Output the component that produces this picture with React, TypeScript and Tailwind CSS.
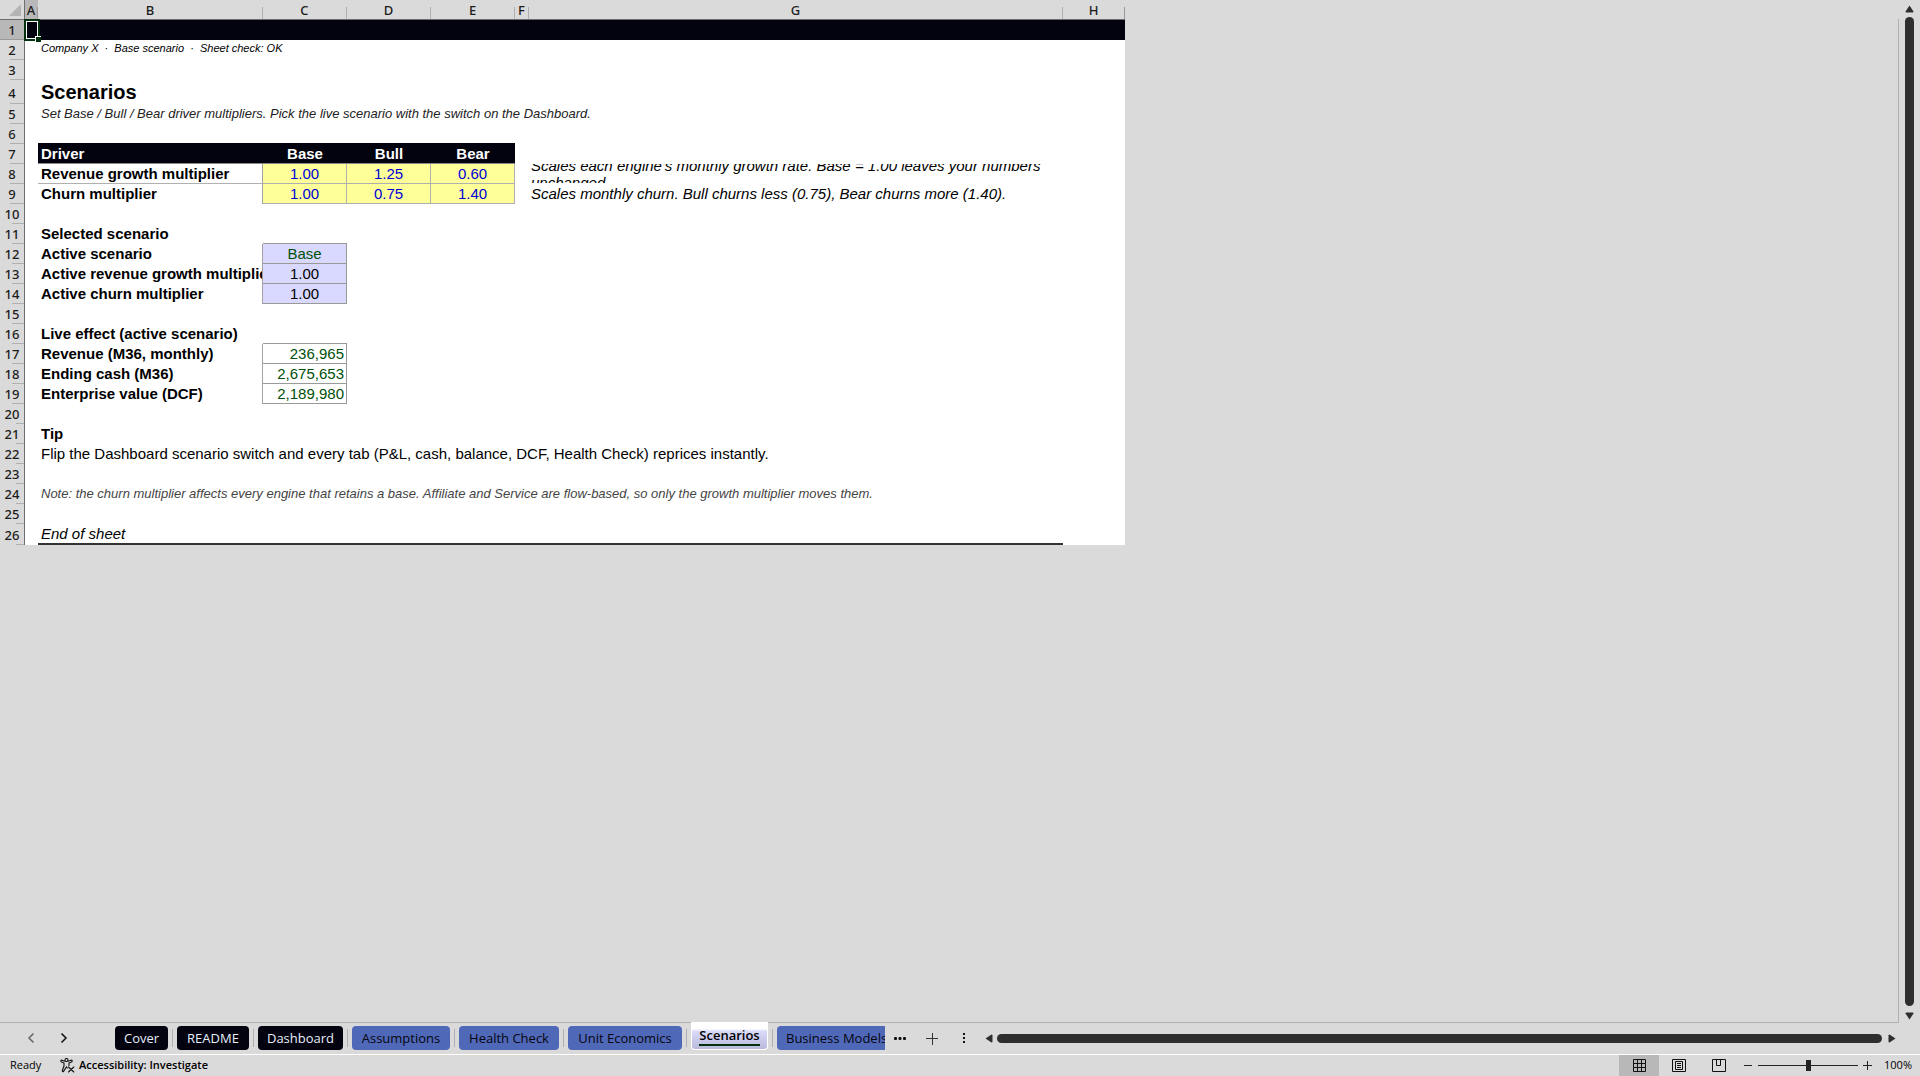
import React from "react";

function Column({ name, last, selected }: { name: string; last?: boolean; selected?: boolean }) {
  return (
    <th scope="col" className={`border-b border-[#6e6e6e] p-0 font-medium ${selected ? "bg-[#b8b8b8]" : "bg-[#dadada]"}`}>
      <div className="flex h-[19px] items-end overflow-hidden">
        <span className="flex-1 text-center leading-[18px]">{name}</span>
        <span className={`h-3 w-px ${last || selected ? "bg-[#9a9a9a]" : "bg-[#b0b0b0]"}`} />
      </div>
    </th>
  );
}

function Row({ n, tall, children }: { n: number; tall?: boolean; children?: React.ReactNode }) {
  return (
    <tr className={tall ? "h-6" : "h-5"}>
      <th
        scope="row"
        className="border-r border-[#6e6e6e] bg-[#dadada] p-0 font-['Noto_Sans',sans-serif] text-[13px] font-medium text-[#1c1c1c]"
      >
        <div className={`flex flex-col ${tall ? "h-6" : "h-5"}`}>
          <span className={`flex-1 overflow-hidden text-center ${tall ? "leading-[27px]" : "leading-[21px]"}`}>{n}</span>
          <span className={`h-px self-end bg-[#b0b0b0] ${n < 10 ? "w-[14px]" : n < 20 ? "w-3" : "w-2"}`} />
        </div>
      </th>
      <td className="p-0" />
      {children ?? <td colSpan={7} />}
    </tr>
  );
}

const label = "overflow-hidden whitespace-nowrap p-0 pl-[3px] align-top leading-[19px] font-bold text-[15px]";

function Label({ children, boxed, line }: { children: React.ReactNode; boxed?: boolean; line?: boolean }) {
  return (
    <td className={`${label} ${boxed ? "border-r border-r-[#a3a3a3]" : ""} ${line ? "border-b border-b-[#b0b0b0]" : ""}`}>{children}</td>
  );
}

function Input({ value }: { value: string }) {
  return (
    <td className="border-r border-b border-[#b0b0b0] bg-[#ffff99] p-0 text-center text-[15px] leading-[19px] text-[#0000d8]">{value}</td>
  );
}

function Tab({ name, width, dark }: { name: string; width: string; dark?: boolean }) {
  return (
    <>
      <button
        className={`h-6 shrink-0 rounded-[4px] text-center text-[13px] leading-6 ${width} ${dark ? "bg-[#02030f] text-[#e8eefa]" : "bg-[#5068b8] font-medium text-[#05060f]"}`}
      >
        {name}
      </button>
      <Separator />
    </>
  );
}

function Separator() {
  return <span className="mx-1 mb-[3px] h-[18px] w-px shrink-0 bg-[#b0b0b0]" />;
}

const zoomSlider =
  "h-4 w-[100px] appearance-none bg-transparent [&::-webkit-slider-runnable-track]:h-px [&::-webkit-slider-runnable-track]:bg-[#222] [&::-webkit-slider-thumb]:-mt-[5px] [&::-webkit-slider-thumb]:h-[11px] [&::-webkit-slider-thumb]:w-[5px] [&::-webkit-slider-thumb]:appearance-none [&::-webkit-slider-thumb]:bg-[#222]";

export default function App() {
  return (
    <div className="flex h-screen w-full flex-col overflow-hidden bg-[#dadada] font-['Liberation_Sans',Arial,sans-serif] text-black">
      <div className="flex min-h-0 flex-1">
        <main className="min-w-0 flex-1 overflow-hidden border-b border-[#b0b0b0]">
          <table className="w-[1125px] table-fixed border-separate border-spacing-0 bg-white">
            <colgroup>
              <col className="w-[25px]" />
              <col className="w-[13px]" />
              <col className="w-[225px]" />
              <col className="w-[84px]" />
              <col className="w-[84px]" />
              <col className="w-[84px]" />
              <col className="w-[14px]" />
              <col className="w-[534px]" />
              <col className="w-[62px]" />
            </colgroup>
            <thead>
              <tr className="font-['Noto_Sans',sans-serif] text-[13px] text-[#1c1c1c]">
                <th className="border-r border-b border-[#6e6e6e] bg-[#dadada] p-0">
                  <button aria-label="Select all" className="flex h-[19px] w-6 items-end justify-end pr-[3px] pb-[3px]">
                    <svg width="12" height="12" viewBox="0 0 12 12">
                      <path d="M12 0V12H0Z" fill="#b4b4b4" />
                    </svg>
                  </button>
                </th>
                <Column name="A" selected />
                <Column name="B" />
                <Column name="C" />
                <Column name="D" />
                <Column name="E" />
                <Column name="F" />
                <Column name="G" />
                <Column name="H" last />
              </tr>
            </thead>
            <tbody>
              <tr className="h-5">
                <th scope="row" className="border-r border-[#6e6e6e] bg-[#b8b8b8] p-0 font-['Noto_Sans',sans-serif] text-[13px] font-medium text-[#1c1c1c]">
                  <div className="h-5 overflow-hidden border-b border-[#9a9a9a] leading-[21px]">1</div>
                </th>
                <td className="relative bg-[#02030f] p-0">
                  <div className="absolute -top-px -left-px h-[22px] w-4 border-2 border-[#03300f]">
                    <div className="h-full border border-white" />
                    <span className="absolute -right-[3px] -bottom-[3px] h-[6px] w-[6px] border-t border-l border-white bg-[#03300f]" />
                  </div>
                </td>
                <td colSpan={7} className="bg-[#02030f] p-0" />
              </tr>
              <Row n={2}>
                <td colSpan={7} className="p-0 pl-[3px] align-top text-[11px] leading-[17px] whitespace-pre italic">
                  {"Company X  ·  Base scenario  ·  Sheet check: OK"}
                </td>
              </Row>
              <Row n={3} />
              <Row n={4} tall>
                <td colSpan={7} className="p-0 pl-[3px] text-[20px] leading-6 font-bold">Scenarios</td>
              </Row>
              <Row n={5}>
                <td colSpan={7} className="p-0 pl-[3px] text-[13px] leading-5 text-[#222] italic">
                  Set Base / Bull / Bear driver multipliers. Pick the live scenario with the switch on the Dashboard.
                </td>
              </Row>
              <Row n={6}>
                <td colSpan={4} className="border-b border-[#02030f] p-0" />
                <td colSpan={3} />
              </Row>
              <Row n={7}>
                <td className={`${label} border-b border-[#8a8a8a] bg-[#02030f] text-white`}>Driver</td>
                {["Base", "Bull", "Bear"].map((s) => (
                  <td key={s} className="border-b border-[#8a8a8a] bg-[#02030f] p-0 text-center text-[15px] leading-[19px] font-bold text-white">{s}</td>
                ))}
                <td colSpan={3} />
              </Row>
              <Row n={8}>
                <Label boxed line>Revenue growth multiplier</Label>
                <Input value="1.00" />
                <Input value="1.25" />
                <Input value="0.60" />
                <td />
                <td className="p-0 pl-[2px] text-[15px] italic">
                  <div className="flex h-5 items-center overflow-hidden border-b border-transparent">
                    <p className="leading-[17px]">Scales each engine's monthly growth rate. Base = 1.00 leaves your numbers unchanged.</p>
                  </div>
                </td>
                <td />
              </Row>
              <Row n={9}>
                <Label boxed>Churn multiplier</Label>
                <Input value="1.00" />
                <Input value="0.75" />
                <Input value="1.40" />
                <td />
                <td className="p-0 pl-[2px] text-[15px] leading-5 whitespace-nowrap italic">
                  Scales monthly churn. Bull churns less (0.75), Bear churns more (1.40).
                </td>
                <td />
              </Row>
              <Row n={10} />
              <Row n={11}>
                <Label>Selected scenario</Label>
                <td className="border-b border-[#9a9a9a] p-0" />
                <td colSpan={5} />
              </Row>
              {[
                { n: 12, name: "Active scenario", value: "Base" },
                { n: 13, name: "Active revenue growth multiplier", value: "1.00" },
                { n: 14, name: "Active churn multiplier", value: "1.00" },
              ].map((r) => (
                <Row key={r.n} n={r.n}>
                  <Label boxed>{r.name}</Label>
                  <td className={`border-r border-b border-[#9a9a9a] bg-[#d9d9ff] p-0 text-center text-[15px] leading-[19px] ${r.n === 12 ? "text-[#00500a]" : ""}`}>{r.value}</td>
                  <td colSpan={5} />
                </Row>
              ))}
              <Row n={15} />
              <Row n={16}>
                <Label>Live effect (active scenario)</Label>
                <td className="border-b border-[#9a9a9a] p-0" />
                <td colSpan={5} />
              </Row>
              {[
                { n: 17, name: "Revenue (M36, monthly)", value: "236,965" },
                { n: 18, name: "Ending cash (M36)", value: "2,675,653" },
                { n: 19, name: "Enterprise value (DCF)", value: "2,189,980" },
              ].map((r) => (
                <Row key={r.n} n={r.n}>
                  <Label boxed>{r.name}</Label>
                  <td className="border-r border-b border-[#9a9a9a] p-0 pr-[2px] text-right text-[15px] leading-[19px] text-[#00500a]">{r.value}</td>
                  <td colSpan={5} />
                </Row>
              ))}
              <Row n={20} />
              <Row n={21}>
                <Label>Tip</Label>
                <td colSpan={6} />
              </Row>
              <Row n={22}>
                <td colSpan={7} className="p-0 pl-[3px] text-[15px] leading-5">
                  Flip the Dashboard scenario switch and every tab (P&amp;L, cash, balance, DCF, Health Check) reprices instantly.
                </td>
              </Row>
              <Row n={23} />
              <Row n={24}>
                <td colSpan={7} className="p-0 pl-[3px] text-[13px] leading-5 text-[#444] italic">
                  Note: the churn multiplier affects every engine that retains a base. Affiliate and Service are flow-based, so only the growth multiplier moves them.
                </td>
              </Row>
              <Row n={25} />
              <Row n={26}>
                <td colSpan={6} className="border-b-2 border-[#333] p-0 pl-[3px] text-[15px] leading-[19px] italic">End of sheet</td>
                <td />
              </Row>
            </tbody>
          </table>
        </main>
        <div className="mt-[19px] w-px bg-[#b0b0b0]" />
        <div className="flex w-[21px] flex-col items-center pr-px">
          <button aria-label="Scroll up" className="flex h-[17px] items-center">
            <svg width="9" height="8" viewBox="0 0 9 8">
              <path d="M4.5 0.5L8.5 6.500Q8.500 7.500 7.500 7.500H1.500Q.5 7.500 .5 6.500Z" fill="#2e2e2e" />
            </svg>
          </button>
          <div className="w-[9px] flex-1 rounded-full bg-[#2e2e2e]" />
          <button aria-label="Scroll down" className="flex h-[17px] items-end pb-[3px]">
            <svg width="9" height="8" viewBox="0 0 9 8">
              <path d="M4.500 7.500L8.500 1.500Q8.500 .5 7.500 .5H1.500Q.5 .5 .5 1.500Z" fill="#2e2e2e" />
            </svg>
          </button>
        </div>
      </div>

      <div className="flex h-[31px] shrink-0 font-['Open_Sans','Noto_Sans',sans-serif]">
        <nav aria-label="Sheets" className="flex h-full w-[885px] items-end overflow-x-clip pb-1">
          <button aria-label="Previous sheet" className="flex h-6 w-[62px] shrink-0 items-center justify-center">
            <svg width="8" height="12" viewBox="0 0 8 12" fill="none" stroke="#666" strokeWidth="1.500"><path d="M6.500 1.500L2 6L6.500 10.500" /></svg>
          </button>
          <button aria-label="Next sheet" className="mr-[49px] flex h-6 w-1 shrink-0 items-center justify-center">
            <svg className="shrink-0" width="8" height="12" viewBox="0 0 8 12" fill="none" stroke="#111" strokeWidth="1.500"><path d="M1.500 1.500L6 6L1.500 10.500" /></svg>
          </button>
          <Tab name="Cover" width="w-[53px]" dark />
          <Tab name="README" width="w-[72px]" dark />
          <Tab name="Dashboard" width="w-[85px]" dark />
          <Tab name="Assumptions" width="w-[98px]" />
          <Tab name="Health Check" width="w-[100px]" />
          <Tab name="Unit Economics" width="w-[114px]" />
          <button className="flex h-7 w-[77px] shrink-0 flex-col items-center rounded-b-[4px] border border-t-0 border-white bg-linear-to-b from-white from-25% via-[#d9d9f8] via-35% to-[#b9b9dd] pt-[5px] text-[13px] leading-[17px] font-semibold">
            <span className="border-b-2 border-[#03300f]">Scenarios</span>
          </button>
          <Separator />
          <button className="h-6 w-[120px] shrink-0 rounded-[4px] bg-[#5068b8] pl-[9px] text-left text-[13px] leading-6 font-medium whitespace-nowrap text-[#05060f]">Business Models</button>
        </nav>
        <button aria-label="More sheets" className="flex w-[30px] items-center justify-center">
          <svg width="12" height="3" viewBox="0 0 12 3" fill="#111"><rect width="3" height="3" rx="1" /><rect x="4.500" width="3" height="3" rx="1" /><rect x="9" width="3" height="3" rx="1" /></svg>
        </button>
        <button aria-label="New sheet" className="flex w-[34px] items-center justify-center">
          <svg width="12" height="12" viewBox="0 0 12 12" stroke="#333"><path d="M0 5.500H12M6.500 0V12" /></svg>
        </button>
        <button aria-label="Resize tabs" className="flex w-[30px] items-center justify-center">
          <svg width="3" height="11" viewBox="0 0 3 11" fill="#111"><rect width="2" height="2" /><rect y="4" width="2" height="2" /><rect y="8" width="2" height="2" /></svg>
        </button>
        <div className="flex min-w-0 flex-1 items-center gap-1 pr-6">
          <button aria-label="Scroll left" className="ml-[6px]">
            <svg width="8" height="9" viewBox="0 0 8 9"><path d="M.5 4.500L6.500 .5Q7.500 .5 7.500 1.500V7.500Q7.500 8.500 6.500 8.500Z" fill="#2e2e2e" /></svg>
          </button>
          <div className="h-[9px] flex-1 rounded-full bg-[#2e2e2e]" />
          <button aria-label="Scroll right" className="ml-[2px]">
            <svg width="8" height="9" viewBox="0 0 8 9"><path d="M7.500 4.500L1.500 .5Q.5 .5 .5 1.500V7.500Q.5 8.500 1.500 8.500Z" fill="#2e2e2e" /></svg>
          </button>
        </div>
      </div>

      <footer className="flex h-[22px] shrink-0 items-center border-t border-white font-['Open_Sans','Noto_Sans',sans-serif] text-[11px]">
        <span className="w-[60px] pl-[10px] font-medium">Ready</span>
        <button className="flex items-center gap-1 font-semibold">
          <svg width="15" height="15" viewBox="0 0 15 15" fill="none" stroke="#111" strokeWidth="1.100" strokeLinecap="round" strokeLinejoin="round">
            <circle cx="6.500" cy="2" r="1.500" />
            <path d="M5 3.200L2 2.200Q.8 2 .8 3Q.8 3.600 1.500 3.900L4 5V8L2.300 12.500Q2.200 13.800 3.400 13.600L6.500 8.800L7.300 10M8 3.200L11 2.200Q12.200 2 12.200 3Q12.200 3.600 11.500 3.900L9 5V7.500M8.500 9L13.800 14M13.800 9L8.500 14" />
          </svg>
          Accessibility: Investigate
        </button>
        <div className="ml-auto flex h-full items-center">
          <button aria-label="Normal view" className="flex h-full w-10 items-center justify-center bg-[#b8b8b8]">
            <svg width="13" height="13" viewBox="0 0 13 13" fill="none" stroke="#111"><path d="M.5 .5H12.500V12.500H.5ZM4.500 .5V12.500M8.500 .5V12.500M.5 4.500H12.500M.5 8.500H12.500" /></svg>
          </button>
          <button aria-label="Page layout" className="flex h-full w-10 items-center justify-center">
            <svg width="14" height="13" viewBox="0 0 14 13" fill="none" stroke="#111"><path d="M.5 .5H13.500V12.500H.5ZM3.500 2.500H10.500V10.500H3.500ZM5 4.500H9M5 6.500H9M5 8.500H9" /></svg>
          </button>
          <button aria-label="Page break preview" className="flex h-full w-10 items-center justify-center">
            <svg width="14" height="13" viewBox="0 0 14 13" fill="none" stroke="#111"><path d="M.5 .5H13.500V12.500H.5ZM4.500 .5V6.500H8.500V.5" /></svg>
          </button>
          <button aria-label="Zoom out" className="flex h-full w-[19px] items-center justify-center">
            <svg width="9" height="9" viewBox="0 0 9 9" stroke="#222"><path d="M0 4.500H8" /></svg>
          </button>
          <input aria-label="Zoom" type="range" min="0" max="100" defaultValue="50" className={zoomSlider} />
          <button aria-label="Zoom in" className="flex h-full w-[19px] items-center justify-center">
            <svg width="9" height="9" viewBox="0 0 9 9" stroke="#222"><path d="M0 4.500H9M4.500 0V9" /></svg>
          </button>
          <span className="w-[43px] pr-2 text-right font-medium">100%</span>
        </div>
      </footer>
    </div>
  );
}
